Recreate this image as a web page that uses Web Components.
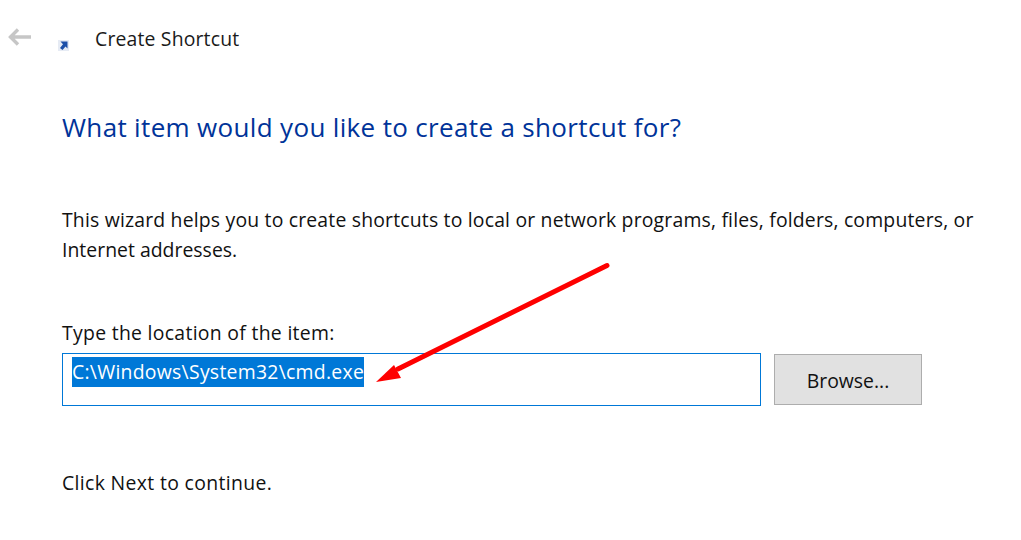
<!DOCTYPE html>
<html>
<head>
<meta charset="utf-8">
<title>Create Shortcut</title>
<style>
  html, body { margin: 0; background: #fff; }
  body { width: 1021px; height: 540px; overflow: hidden; font-family: "Open Sans", "Noto Sans", sans-serif; color: #111; }
  .tight { letter-spacing: 0.02px; }
</style>
</head>
<body>
<wizard-page>
  <wizard-header slot="header">Create Shortcut</wizard-header>
  <h-title slot="title">What item would you like to create a shortcut for?</h-title>
  <span slot="intro">This wizard helps you to create shortcuts to local or network programs, files, folders, computers, or<br><span class="tight">Internet addresses.</span></span>
  <location-field slot="field" label="Type the location of the item:" value="C:\Windows\System32\cmd.exe"></location-field>
  <span slot="footer">Click Next to continue.</span>
</wizard-page>
<red-arrow></red-arrow>

<script>
class WizardHeader extends HTMLElement {
    constructor() {
        super();
        this.attachShadow({mode: 'open'});
        this.shadowRoot.innerHTML = `
        <style>
          :host { display: flex; align-items: flex-start; height: 78px; }
          .back { width: 24px; height: 20px; margin: 27px 0 0 8px; }
          .icon { width: 11px; height: 11px; margin: 40px 0 0 26px; }
          .name { margin: 25px 0 0 26px; font-size: 19.4px; line-height: 28px; color: #1a1a1a; letter-spacing: 0.17px; }
        </style>
        <svg class="back" viewBox="0 0 24 20">
          <path d="M1.5 10H23M10 2.5 2.5 10l7.5 7.5" fill="none" stroke="#c6c6c6" stroke-width="3.4"/>
        </svg>
        <svg class="icon" viewBox="0 0 11 11">
          <rect x="0" y="0" width="11" height="11" fill="#e6ebf4"/>
          <path d="M2.5 1.5H9.5V8.5L7.5 6.5 4.5 10 2 8 5 4.2Z" fill="#1c4fa8"/>
        </svg>
        <span class="name"><slot></slot></span>
        `;
    }
}

class HTitle extends HTMLElement {
    constructor() {
        super();
        this.attachShadow({mode: 'open'});
        this.shadowRoot.innerHTML = `
        <style>
          :host { display: block; font-size: 26px; line-height: 34px; letter-spacing: 0.34px; color: #003399; white-space: nowrap; }
        </style>
        <slot></slot>
        `;
    }
}

class LocationField extends HTMLElement {
    constructor() {
        super();
        this.attachShadow({mode: 'open'});
        this.shadowRoot.innerHTML = `
        <style>
          :host { display: block; }
          .label { font-size: 19.4px; line-height: 28px; letter-spacing: 0.3px; margin-bottom: 6px; }
          .row { display: flex; align-items: flex-start; gap: 13px; }
          .input { box-sizing: border-box; width: 699px; height: 53px; border: 1px solid #0078d7; padding: 3px 9px; }
          .sel { display: inline-block; background: #0078d7; color: #fff; font-size: 19.4px; line-height: 30px; letter-spacing: 0.27px; white-space: nowrap; }
          button { box-sizing: border-box; width: 148px; height: 51px; margin-top: 1px; background: #e1e1e1; border: 1px solid #adadad; font: inherit; font-size: 19.4px; color: #111; padding: 2px 0 0; }
        </style>
        <div class="label"></div>
        <div class="row">
          <div class="input"><span class="sel"></span></div>
          <button>Browse...</button>
        </div>
        `;
    }

    connectedCallback() {
        this.shadowRoot.querySelector('.label').textContent = this.getAttribute('label');
        this.shadowRoot.querySelector('.sel').textContent = this.getAttribute('value');
    }
}

class WizardPage extends HTMLElement {
    constructor() {
        super();
        this.attachShadow({mode: 'open'});
        this.shadowRoot.innerHTML = `
        <style>
          :host { display: block; width: 1021px; height: 540px; font-size: 19.4px; line-height: 30px; }
          .body { padding: 32px 0 0 62px; }
          .intro { margin-top: 61px; white-space: nowrap; letter-spacing: 0.185px; }
          .field { margin-top: 54px; }
          .footer { margin-top: 62px; letter-spacing: 0.35px; }
        </style>
        <slot name="header"></slot>
        <div class="body">
          <slot name="title"></slot>
          <div class="intro"><slot name="intro"></slot></div>
          <div class="field"><slot name="field"></slot></div>
          <div class="footer"><slot name="footer"></slot></div>
        </div>
        `;
    }
}

// annotation drawn over the dialog
class RedArrow extends HTMLElement {
    constructor() {
        super();
        this.attachShadow({mode: 'open'});
        this.shadowRoot.innerHTML = `
        <style>
          :host { position: absolute; left: 370px; top: 255px; width: 250px; height: 135px; pointer-events: none; }
          svg { display: block; }
        </style>
        <svg width="250" height="135" viewBox="0 0 250 135">
          <path d="M237 10.5 28 114" fill="none" stroke="#fe0000" stroke-width="5" stroke-linecap="round"/>
          <path d="M6 127 24 110 31 123Z" fill="#fe0000"/>
        </svg>
        `;
    }
}

customElements.define('wizard-header', WizardHeader);
customElements.define('h-title', HTitle);
customElements.define('location-field', LocationField);
customElements.define('wizard-page', WizardPage);
customElements.define('red-arrow', RedArrow);
</script>
</body>
</html>
